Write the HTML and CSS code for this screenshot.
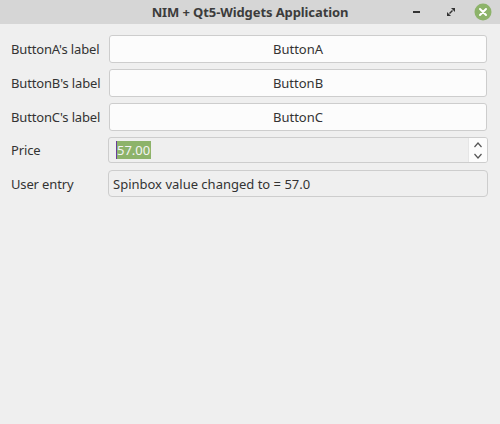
FILE: index.html
```html
<!DOCTYPE html>
<html>
<head>
<meta charset="utf-8">
<link rel="stylesheet" href="styles.css">
</head>
<body>
<div class="window">
  <div class="titlebar">
    <div class="title">NIM + Qt5-Widgets Application</div>
    <div class="controls">
      <span class="ctl min"><svg width="10" height="10" viewBox="0 0 10 10"><rect x="1" y="4" width="7" height="2" fill="#333"/></svg></span>
      <span class="ctl max"><svg width="10" height="10" viewBox="0 0 10 10"><path d="M5 1h4v4z M1 5v4h4z" fill="#333"/><path d="M3.5 6.5l3-3" stroke="#333" stroke-width="1.4"/></svg></span>
      <span class="ctl close"><svg width="18" height="18" viewBox="0 0 18 18"><circle cx="9" cy="9" r="8.5" fill="#8db36a"/><path d="M6 6l6 6M12 6l-6 6" stroke="#fff" stroke-width="2" stroke-linecap="round"/></svg></span>
    </div>
  </div>
  <div class="form">
    <div class="label">ButtonA's label</div>
    <div class="button">ButtonA</div>
    <div class="label">ButtonB's label</div>
    <div class="button">ButtonB</div>
    <div class="label">ButtonC's label</div>
    <div class="button">ButtonC</div>
    <div class="label">Price</div>
    <div class="spinbox">
      <div class="spin-text"><span class="caret"></span><span class="sel">57.00</span></div>
      <div class="spin-buttons">
        <svg width="10" height="8" viewBox="0 0 10 8"><path d="M1.5 6l3.5-4 3.5 4" fill="none" stroke="#555" stroke-width="1.2"/></svg>
        <svg width="10" height="8" viewBox="0 0 10 8"><path d="M1.5 2l3.5 4 3.5-4" fill="none" stroke="#555" stroke-width="1.2"/></svg>
      </div>
    </div>
    <div class="label entry-label">User entry</div>
    <div class="entry">Spinbox value changed to = 57.0</div>
  </div>
</div>
</body>
</html>
```
FILE: styles.css
```css
html, body {
  margin: 0;
  padding: 0;
  width: 500px;
  height: 424px;
  overflow: hidden;
  background: #efefef;
  font-family: "Noto Sans", "DejaVu Sans", sans-serif;
  font-size: 13px;
  color: #333;
}
.window {
  width: 500px;
  height: 424px;
  display: flex;
  flex-direction: column;
}
.titlebar {
  height: 24px;
  background: #d6d6d6;
  position: relative;
  display: flex;
  align-items: center;
  justify-content: center;
}
.title {
  font-weight: bold;
  font-size: 13px;
  color: #3c3c3c;
  letter-spacing: -0.1px;
}
.controls {
  position: absolute;
  right: 8px;
  top: 3px;
  display: flex;
  align-items: center;
  gap: 14px;
}
.ctl {
  display: flex;
  align-items: center;
  justify-content: center;
  width: 18px;
  height: 18px;
}
.min {
  margin-right: 2px;
}
.form {
  display: grid;
  grid-template-columns: 97px 1fr;
  row-gap: 6px;
  padding: 11px 12px 0 11px;
  align-items: center;
}
.label {
  color: #333;
  white-space: nowrap;
  letter-spacing: -0.15px;
}
.button {
  height: 26px;
  margin: 0 1px;
  background: #fcfcfc;
  border: 1px solid #cdcdcd;
  border-radius: 3px;
  display: flex;
  align-items: center;
  justify-content: center;
  color: #333;
}
.spinbox {
  height: 24px;
  border: 1px solid #cdcdcd;
  border-radius: 3px;
  background: #efefef;
  display: flex;
  align-items: stretch;
  overflow: hidden;
}
.spin-text {
  flex: 1;
  display: flex;
  align-items: center;
  padding-left: 7px;
}
.caret {
  width: 1px;
  height: 18px;
  background: #6a3d9a;
}
.sel {
  background: #8db36a;
  color: #f4f4f4;
  line-height: 18px;
  padding-right: 1px;
}
.spin-buttons {
  width: 18px;
  background: #fcfcfc;
  border-left: 1px solid #e6e6e6;
  display: flex;
  flex-direction: column;
  align-items: center;
  justify-content: center;
  gap: 3px;
}
.entry-label,
.entry {
  margin-top: 1px;
}
.entry {
  height: 25px;
  border: 1px solid #cdcdcd;
  border-radius: 4px;
  background: #efefef;
  display: flex;
  align-items: center;
  padding-left: 4px;
  color: #333;
}
```
